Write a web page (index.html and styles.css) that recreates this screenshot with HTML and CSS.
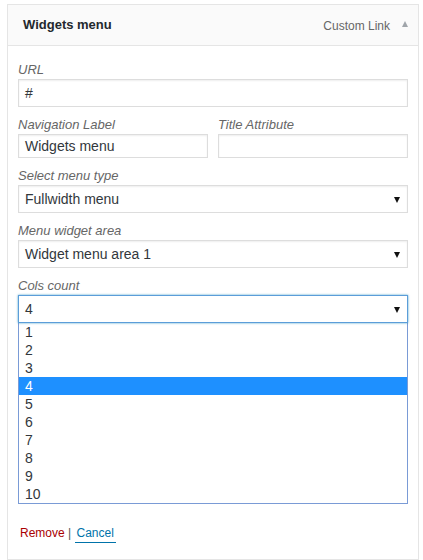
FILE: index.html
```html
<!DOCTYPE html>
<html>
<head>
<meta charset="utf-8">
<link rel="stylesheet" href="styles.css">
</head>
<body>
<div class="item">
  <div class="handle">
    <span class="title">Widgets menu</span>
    <span class="controls"><span class="type">Custom Link</span><span class="toggle"></span></span>
  </div>
  <div class="settings">
    <div class="field first">
      <div class="label">URL</div>
      <div class="input tall">#</div>
    </div>
    <div class="field row">
      <div class="col">
        <div class="label">Navigation Label</div>
        <div class="input short">Widgets menu</div>
      </div>
      <div class="col">
        <div class="label">Title Attribute</div>
        <div class="input short"></div>
      </div>
    </div>
    <div class="field">
      <div class="label">Select menu type</div>
      <div class="input tall select">Fullwidth menu<span class="arrow"></span></div>
    </div>
    <div class="field">
      <div class="label">Menu widget area</div>
      <div class="input tall select">Widget menu area 1<span class="arrow"></span></div>
    </div>
    <div class="field">
      <div class="label">Cols count</div>
      <div class="input tall select focused">4<span class="arrow"></span></div>
      <div class="list">
        <div class="opt">1</div>
        <div class="opt">2</div>
        <div class="opt">3</div>
        <div class="opt sel">4</div>
        <div class="opt">5</div>
        <div class="opt">6</div>
        <div class="opt">7</div>
        <div class="opt">8</div>
        <div class="opt">9</div>
        <div class="opt">10</div>
      </div>
    </div>
    <div class="actions"><span class="remove">Remove</span> <span class="sep">|</span> <span class="cancel">Cancel</span></div>
  </div>
</div>
</body>
</html>
```
FILE: styles.css
```css
html, body {
  margin: 0;
  padding: 0;
  background: #ffffff;
}
body {
  font-family: "Liberation Sans", Arial, sans-serif;
  color: #32373c;
}
.item {
  margin: 4px 4px 0 7px;
  border: 1px solid #e5e5e5;
  background: #ffffff;
}
.handle {
  height: 40px;
  line-height: 40px;
  background: #fafafa;
  border-bottom: 1px solid #e5e5e5;
  padding: 0 10px 0 15px;
  display: flex;
  justify-content: space-between;
}
.title {
  font-size: 13px;
  font-weight: bold;
  color: #23282d;
}
.controls {
  display: flex;
  align-items: center;
}
.type {
  font-size: 12px;
  color: #666;
  line-height: 40px;
  margin-top: 1px;
}
.toggle {
  display: inline-block;
  width: 0;
  height: 0;
  border-left: 3.5px solid transparent;
  border-right: 3.5px solid transparent;
  border-bottom: 6px solid #a0a5aa;
  margin-left: 12px;
  margin-top: -2px;
}
.settings {
  padding: 16px 10px 16px 10px;
}
.field {
  margin-top: 10px;
}
.field.first {
  margin-top: 0;
}
.row {
  display: grid;
  grid-template-columns: 1fr 1fr;
  column-gap: 10px;
}
.label {
  font-size: 13px;
  font-style: italic;
  color: #666;
  line-height: 16px;
  margin-bottom: 1px;
}
.input {
  box-sizing: border-box;
  border: 1px solid #ddd;
  box-shadow: inset 0 1px 2px rgba(0, 0, 0, 0.07);
  padding: 0 6px;
  font-size: 14px;
  color: #32373c;
  background: #fff;
  position: relative;
}
.tall {
  height: 28px;
  line-height: 26px;
}
.short {
  height: 24px;
  line-height: 22px;
}
.select .arrow {
  position: absolute;
  right: 7px;
  top: 11px;
  width: 0;
  height: 0;
  border-left: 3px solid transparent;
  border-right: 3px solid transparent;
  border-top: 6px solid #111;
}
.focused {
  border-color: #5b9dd9;
  box-shadow: 0 0 2px rgba(30, 140, 190, 0.8);
}
.list {
  border: 1px solid #7a9bd6;
  border-top: none;
  background: #fff;
}
.opt {
  height: 18px;
  line-height: 18px;
  font-size: 14px;
  padding-left: 6px;
  color: #32373c;
}
.opt.sel {
  background: #1e90ff;
  color: #fff;
}
.actions {
  margin-top: 20px;
  font-size: 12px;
  line-height: 18px;
  padding-left: 2px;
  color: #555;
}
.remove {
  color: #a00;
}
.cancel {
  display: inline-block;
  color: #0073aa;
  border-bottom: 1px solid #0073aa;
  padding: 0 2px;
  line-height: 18px;
}
```
